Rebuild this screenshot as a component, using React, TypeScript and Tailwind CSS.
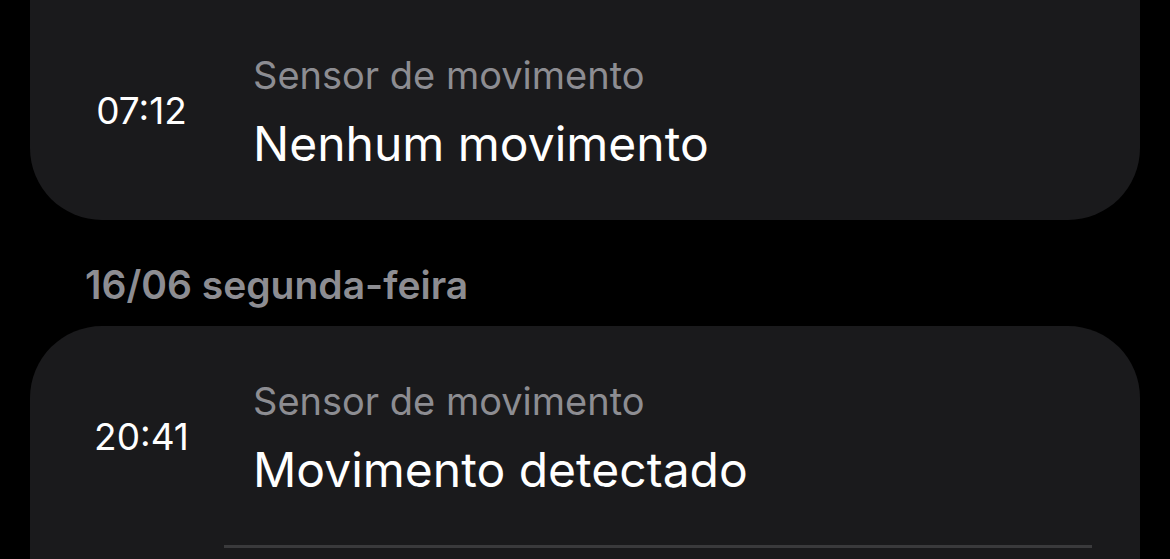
function Row({ time, title }: { time: string; title: string }) {
  return (
    <div className="flex h-[220px]">
      <div className="w-[223px] flex items-center justify-center">
        <div className="text-white text-[37px] leading-none">{time}</div>
      </div>
      <div className="flex flex-col pt-[52px]">
        <div className="text-[#8d8d92] text-[38px] leading-[46px]">Sensor de movimento</div>
        <div className="text-white text-[48px] leading-[58px] mt-[17px]">{title}</div>
      </div>
    </div>
  );
}

export default function App() {
  const font = { fontFamily: 'Inter, "Noto Sans", sans-serif' };
  return (
    <div className="w-[1170px] h-[559px] overflow-hidden bg-black" style={font}>
      <div className="px-[30px]">
        <div className="bg-[#1a1a1c] rounded-b-[72px]">
          <Row time="07:12" title="Nenhum movimento" />
        </div>
        <div className="h-[106px] pl-[55px] pt-[41px]">
          <div className="text-[#8d8d92] text-[39px] font-semibold leading-[48px]">16/06 segunda-feira</div>
        </div>
        <div className="bg-[#1a1a1c] rounded-t-[72px] h-[300px]">
          <div className="h-[219px] overflow-hidden">
            <Row time="20:41" title="Movimento detectado" />
          </div>
          <div className="ml-[194px] mr-[48px] h-[3px] bg-[#3a3a3c]" />
        </div>
      </div>
    </div>
  );
}
